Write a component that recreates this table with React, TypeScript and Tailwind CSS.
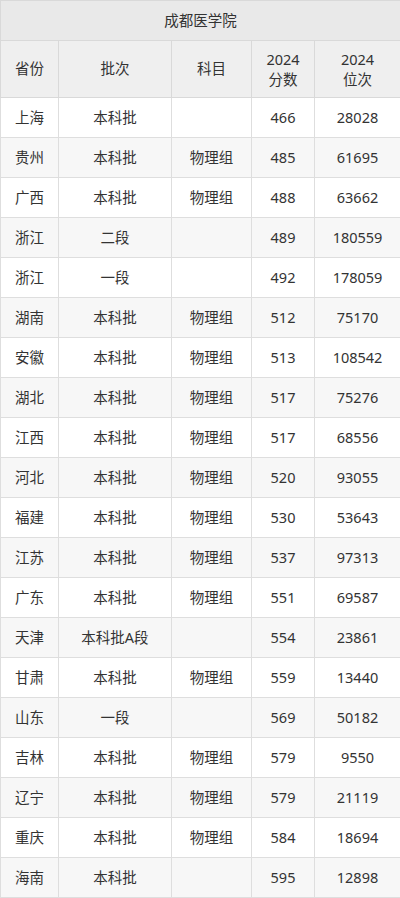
const rows: [string, string, string, string, string][] = [
  ['上海', '本科批', '', '466', '28028'],
  ['贵州', '本科批', '物理组', '485', '61695'],
  ['广西', '本科批', '物理组', '488', '63662'],
  ['浙江', '二段', '', '489', '180559'],
  ['浙江', '一段', '', '492', '178059'],
  ['湖南', '本科批', '物理组', '512', '75170'],
  ['安徽', '本科批', '物理组', '513', '108542'],
  ['湖北', '本科批', '物理组', '517', '75276'],
  ['江西', '本科批', '物理组', '517', '68556'],
  ['河北', '本科批', '物理组', '520', '93055'],
  ['福建', '本科批', '物理组', '530', '53643'],
  ['江苏', '本科批', '物理组', '537', '97313'],
  ['广东', '本科批', '物理组', '551', '69587'],
  ['天津', '本科批A段', '', '554', '23861'],
  ['甘肃', '本科批', '物理组', '559', '13440'],
  ['山东', '一段', '', '569', '50182'],
  ['吉林', '本科批', '物理组', '579', '9550'],
  ['辽宁', '本科批', '物理组', '579', '21119'],
  ['重庆', '本科批', '物理组', '584', '18694'],
  ['海南', '本科批', '', '595', '12898'],
];

export default function App() {
  return (
    <div
      className="w-[400px] bg-white text-[#333] text-[14.5px]"
      style={{ fontFamily: '"Noto Sans", "Noto Sans CJK SC", sans-serif' }}
    >
      <table className="w-[400px] table-fixed border-collapse">
        <colgroup>
          <col className="w-[58px]" />
          <col className="w-[113px]" />
          <col className="w-[80px]" />
          <col className="w-[63px]" />
          <col className="w-[86px]" />
        </colgroup>
        <thead>
          <tr className="h-[40px] bg-[#e9e9e9]">
            <th colSpan={5} className="border border-[#d9d9d9] font-normal">
              成都医学院
            </th>
          </tr>
          <tr className="h-[57px] bg-[#efefef]">
            <th className="border border-[#d9d9d9] font-normal">省份</th>
            <th className="border border-[#d9d9d9] font-normal">批次</th>
            <th className="border border-[#d9d9d9] font-normal">科目</th>
            <th className="border border-[#d9d9d9] font-normal leading-[20px]">
              2024
              <br />
              分数
            </th>
            <th className="border border-[#d9d9d9] font-normal leading-[20px]">
              2024
              <br />
              位次
            </th>
          </tr>
        </thead>
        <tbody>
          {rows.map((r, i) => (
            <tr key={i} className={i % 2 === 1 ? 'h-[40px] bg-[#f7f7f7]' : 'h-[40px] bg-white'}>
              {r.map((c, j) => (
                <td key={j} className="border border-[#dedede] text-center p-0">
                  {c}
                </td>
              ))}
            </tr>
          ))}
        </tbody>
      </table>
    </div>
  );
}
